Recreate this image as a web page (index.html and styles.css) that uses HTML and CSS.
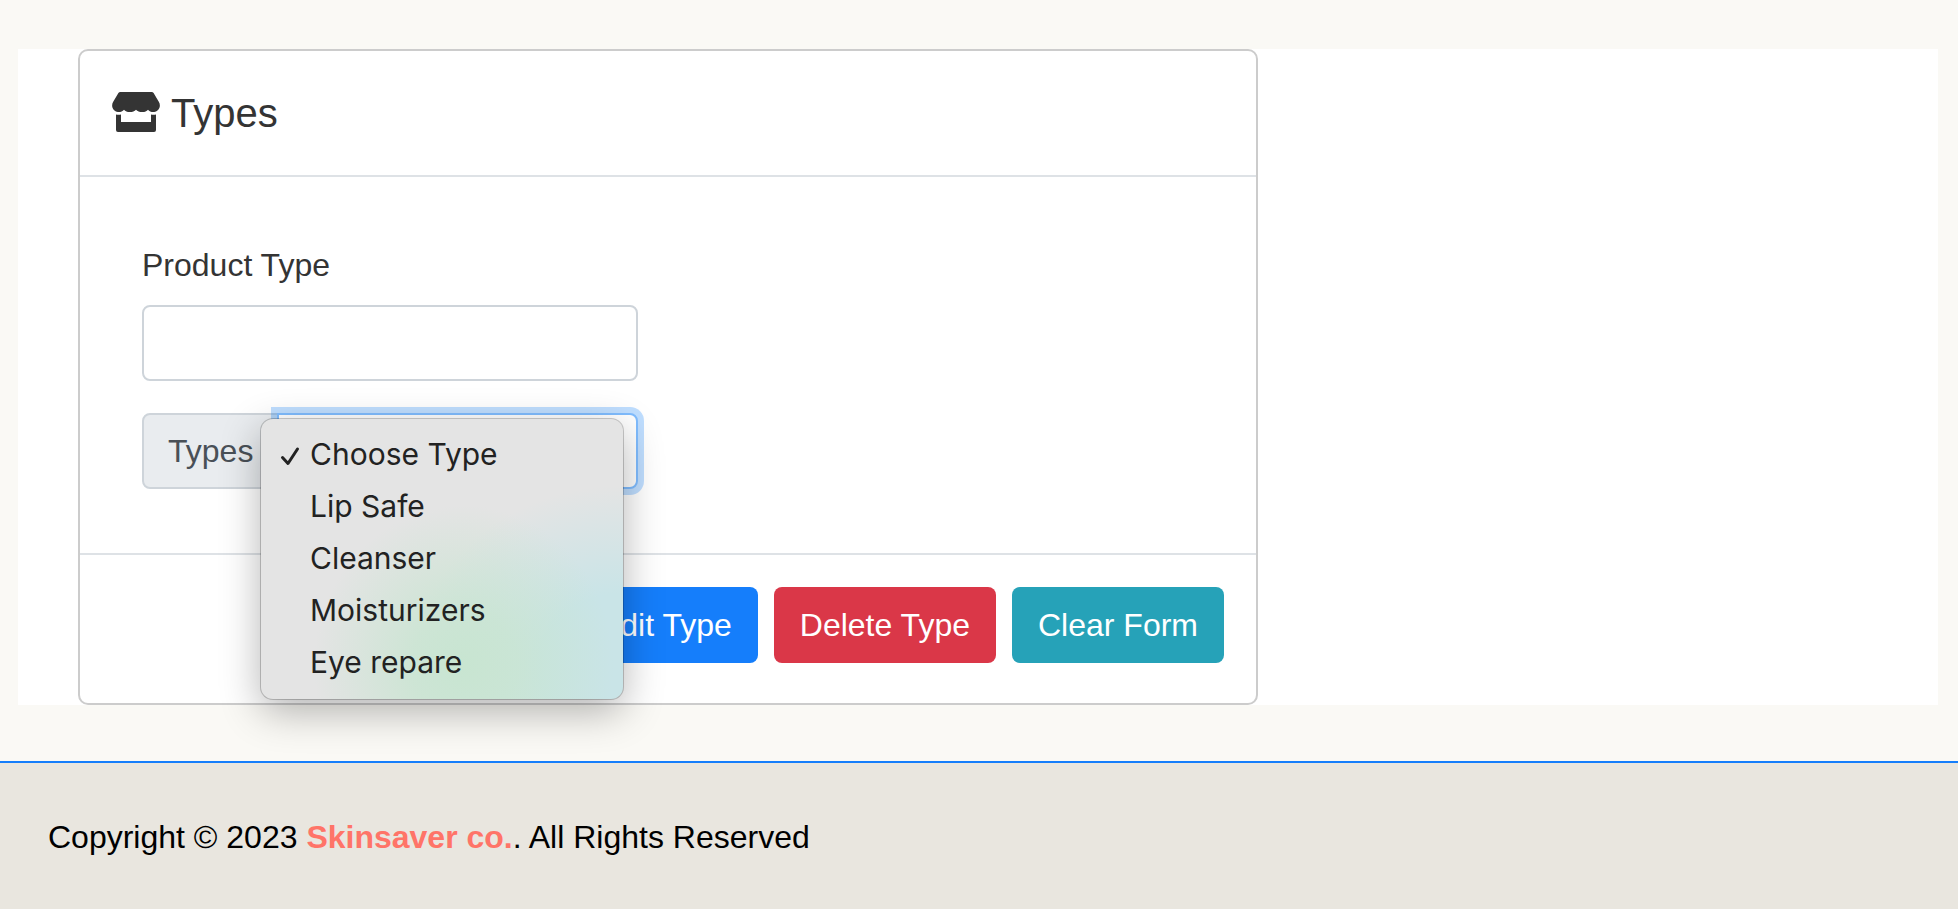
FILE: index.html
```html
<!DOCTYPE html>
<html lang="en">
<head>
<meta charset="utf-8">
<meta name="viewport" content="width=device-width, initial-scale=1">
<title>Types</title>
<link rel="stylesheet" href="styles.css">
</head>
<body>
<main class="panel">
  <section class="card">
    <header class="card-header">
      <svg class="store-icon" viewBox="0 0 48 40" aria-hidden="true">
        <path d="M8.4 0h31.2c.9 0 1.6.4 2 1.100l5.200 8.700c2.600 4.300.200 9.600-4.700 10.200-2.500.3-4.700-.7-6.100-2.300-1.500 1.600-3.600 2.500-6 2.300-2.400 0-4.600-.9-6-2.300-1.400 1.500-3.600 2.300-6 2.300-2.400.1-4.600-.7-6-2.300-1.500 1.600-3.700 2.600-6.100 2.300C1 19.400-1.400 14.100 1.200 9.800L6.400 1.100C6.800.4 7.500 0 8.400 0Z"/>
        <path d="M4 22.500c1.700.4 3.400.4 5 0V30h30v-7.500c1.700.4 3.300.4 5 0V38a2 2 0 0 1-2 2H6a2 2 0 0 1-2-2Z"/>
      </svg>
      <h1 class="card-title">Types</h1>
    </header>
    <form class="card-body">
      <label class="field-label" for="product-type">Product Type</label>
      <input class="text-input" id="product-type" type="text">
      <div class="input-group">
        <label class="group-label" for="type-select">Types</label>
        <div class="select-wrap">
          <select class="type-select" id="type-select">
            <option>Choose Type</option>
            <option>Lip Safe</option>
            <option>Cleanser</option>
            <option>Moisturizers</option>
            <option>Eye repare</option>
          </select>
          <ul class="menu" role="listbox" aria-label="Types">
            <li class="menu-item" role="option" aria-selected="true">
              <svg class="check" viewBox="0 0 20 20" aria-hidden="true"><path d="M2.500 11.500 8 17.500 17.500 3"/></svg>
              Choose Type
            </li>
            <li class="menu-item" role="option">Lip Safe</li>
            <li class="menu-item" role="option">Cleanser</li>
            <li class="menu-item" role="option">Moisturizers</li>
            <li class="menu-item" role="option">Eye repare</li>
          </ul>
        </div>
      </div>
    </form>
    <footer class="card-footer">
      <button class="btn btn-primary" type="button">Edit Type</button>
      <button class="btn btn-danger" type="button">Delete Type</button>
      <button class="btn btn-info" type="button">Clear Form</button>
    </footer>
  </section>
</main>
<footer class="site-footer">
  Copyright © 2023 <a class="brand" href="#">Skinsaver co.</a>. All Rights Reserved
</footer>
</body>
</html>
```
FILE: styles.css
```css
*,
*::before,
*::after {
  box-sizing: border-box;
}

body {
  display: flex;
  flex-direction: column;
  min-height: 100vh;
  margin: 0;
  background: #faf9f5;
  color: #343434;
  font: 32px/48px "Liberation Sans", Arial, sans-serif;
}

.panel {
  margin: 49px 20px 56px 18px;
  padding: 0 60px;
  background: #fff;
}

.card {
  max-width: 1180px;
  border: 2px solid #ccc;
  border-radius: 10px;
  background: #fff;
}

.card-header {
  display: flex;
  align-items: center;
  gap: 11px;
  padding: 32px;
  border-bottom: 2px solid #dee2e6;
}

.store-icon {
  width: 48px;
  height: 40px;
  margin-bottom: 2px;
  fill: #343434;
}

.card-title {
  margin: 0;
  font-size: 40px;
  font-weight: 400;
  line-height: 60px;
}

.card-body {
  display: flex;
  flex-direction: column;
  max-width: 620px;
  padding: 64px 62px;
}

.field-label {
  margin-bottom: 16px;
}

.text-input,
.type-select {
  width: 100%;
  height: 76px;
  padding: 12px 24px;
  border: 2px solid #ced4da;
  border-radius: 8px;
  background: #fff;
  color: #495057;
  font: inherit;
}

.input-group {
  display: flex;
  margin-top: 32px;
}

.group-label {
  padding: 12px 24px;
  width: 137px;
  border: 2px solid #ced4da;
  border-radius: 8px 0 0 8px;
  background: #e9ecef;
  color: #495057;
}

.select-wrap {
  position: relative;
  flex: 1;
  margin-left: -2px;
}

.type-select {
  display: block;
  appearance: none;
  border-color: #80bdff;
  border-radius: 0 8px 8px 0;
  box-shadow: 0 0 0 6px rgba(0, 123, 255, 0.25);
}

.menu {
  position: absolute;
  top: 6px;
  left: -16px;
  right: 15px;
  z-index: 1;
  margin: 0;
  padding: 9px 0 11px;
  border-radius: 12px;
  list-style: none;
  background:
    radial-gradient(ellipse 150px 160px at 56% 88%, #c8e5d1 0%, rgba(200, 229, 209, 0.8) 35%, rgba(200, 229, 209, 0) 100%),
    radial-gradient(ellipse 210px 180px at 100% 88%, #c9e4e7 0%, #c9e4e7 40%, rgba(201, 228, 231, 0) 100%),
    #e4e4e4;
  box-shadow: 0 0 0 1px rgba(0, 0, 0, 0.2), 0 12px 40px rgba(0, 0, 0, 0.3);
  color: #222;
  font-family: Inter, "Liberation Sans", sans-serif;
  font-size: 30px;
}

.menu-item {
  position: relative;
  padding-left: 49px;
  line-height: 52px;
}

.check {
  position: absolute;
  top: 18px;
  left: 19px;
  width: 20px;
  height: 20px;
  fill: none;
  stroke: #222;
  stroke-width: 3;
  stroke-linecap: round;
  stroke-linejoin: round;
}

.card-footer {
  display: flex;
  justify-content: flex-end;
  gap: 16px;
  padding: 32px 32px 40px;
  border-top: 2px solid #dee2e6;
}

.btn {
  height: 76px;
  padding: 0 26px;
  border: 0;
  border-radius: 8px;
  color: #fff;
  font: inherit;
}

.btn-primary {
  background: #157efb;
}

.btn-danger {
  background: #da3748;
}

.btn-info {
  background: #26a2b8;
}

.site-footer {
  flex: 1;
  padding: 50px 48px 48px;
  border-top: 2px solid #157efb;
  background: #e9e6df;
  color: #000;
}

.brand {
  color: #ff7468;
  font-weight: 700;
  text-decoration: none;
}
```
